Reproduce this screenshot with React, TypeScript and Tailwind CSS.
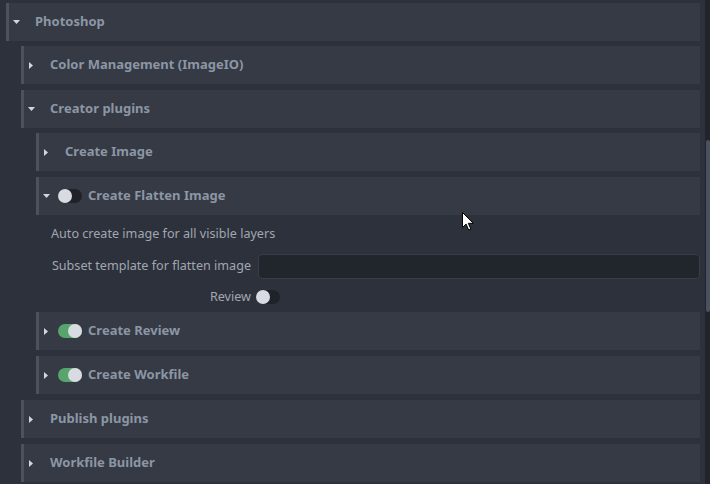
import React from "react";

type Node = {
  title: string;
  open?: boolean;
  toggle?: boolean | null;
  children?: Node[];
  body?: React.ReactNode;
};

function Caret({ open }: { open?: boolean }) {
  return (
    <span className="flex w-3 justify-center">
      {open ? (
        <svg width="7" height="4" viewBox="0 0 7 4">
          <path d="M0 0h7L3.5 4z" fill="#d3d7dd" />
        </svg>
      ) : (
        <svg width="4" height="7" viewBox="0 0 4 7">
          <path d="M0 0v7l4-3.5z" fill="#d3d7dd" />
        </svg>
      )}
    </span>
  );
}

function Toggle({ on }: { on: boolean }) {
  return (
    <span
      className={`flex h-[14px] w-[24px] shrink-0 items-center rounded-full ${
        on ? "justify-end bg-[#57a46c]" : "justify-start bg-[#1f2228]"
      }`}
    >
      <span className="h-[14px] w-[14px] rounded-full bg-[#d8dbe1]" />
    </span>
  );
}

function FlattenBody() {
  return (
    <div className="flex flex-col gap-[11px] pb-[2px] pl-[15px] pt-[10px] text-[12.6px] text-[#a0a7b1]">
      <div className="flex h-[18px] items-center whitespace-nowrap">
        Auto create image for all visible layers
      </div>
      <div className="grid h-[25px] grid-cols-[200px_1fr] items-center gap-[7px]">
        <span className="whitespace-nowrap text-right">Subset template for flatten image</span>
        <div className="h-[25px] rounded-[4px] border border-[#383d48] bg-[#21252c]" />
      </div>
      <div className="grid h-[14px] grid-cols-[200px_1fr] items-center gap-[5px]">
        <span className="whitespace-nowrap text-right leading-[14px]">Review</span>
        <Toggle on={false} />
      </div>
    </div>
  );
}

const tree: Node = {
  title: "Photoshop",
  open: true,
  children: [
    { title: "Color Management (ImageIO)" },
    {
      title: "Creator plugins",
      open: true,
      children: [
        { title: "Create Image" },
        { title: "Create Flatten Image", open: true, toggle: false, body: <FlattenBody /> },
        { title: "Create Review", toggle: true },
        { title: "Create Workfile", toggle: true },
      ],
    },
    { title: "Publish plugins" },
    { title: "Workfile Builder" },
  ],
};

function Section({ node }: { node: Node }) {
  const hasToggle = node.toggle !== undefined && node.toggle !== null;
  return (
    <div className="flex flex-col">
      <div className="flex h-[38px] items-center border-l-[3px] border-[#4c515a] bg-[#353a45] pl-px">
        <Caret open={node.open} />
        {hasToggle && (
          <span className="ml-[6px]">
            <Toggle on={!!node.toggle} />
          </span>
        )}
        <span
          className={`${hasToggle ? "ml-[6px]" : "ml-[13px]"} whitespace-nowrap text-[13px] font-bold text-[#8c96a4]`}
        >
          {node.title}
        </span>
      </div>
      {node.open && node.children && (
        <div className="flex flex-col gap-[6px] pl-[15px] pt-[5px]">
          {node.children.map((c, i) => (
            <Section key={i} node={c} />
          ))}
        </div>
      )}
      {node.open && node.body}
    </div>
  );
}

export default function App() {
  return (
    <div
      className="relative flex h-[484px] w-[710px] overflow-hidden bg-[#2d313b]"
      style={{ fontFamily: '"Noto Sans", "Open Sans", sans-serif' }}
    >
      <div className="w-[700px] pl-[6px] pt-[3px]">
        <Section node={tree} />
      </div>
      <div className="ml-[5px] flex h-full w-[5px] justify-end bg-[#21242a]">
        <div className="mt-[140px] h-[172px] w-[4px] rounded-t-[3px] rounded-b-[3px] bg-[#4b515e]" />
      </div>
      <svg
        className="absolute left-[462px] top-[212px]"
        width="12"
        height="19"
        viewBox="0 0 12 19"
      >
        <path
          d="M0.5 0.5v15l3.6-3.4 2.6 6 2.2-1-2.6-5.8h5z"
          fill="#fff"
          stroke="#000"
          strokeWidth="1"
        />
      </svg>
    </div>
  );
}
